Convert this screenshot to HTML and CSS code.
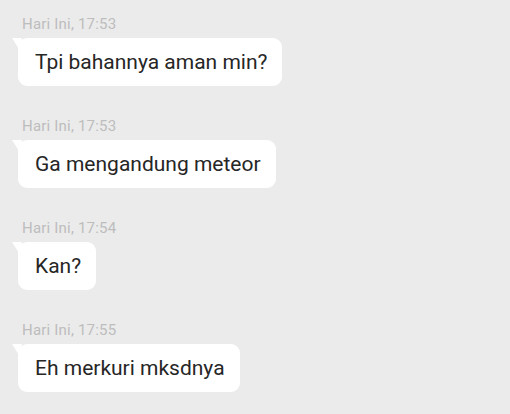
FILE: index.html
```html
<!DOCTYPE html>
<html lang="id">
<head>
<meta charset="utf-8">
<title>Chat</title>
<link rel="stylesheet" href="styles.css">
</head>
<body>
<main class="chat">
  <div class="msg">
    <div class="time">Hari Ini, 17:53</div>
    <div class="bubble">Tpi bahannya aman min?</div>
  </div>
  <div class="msg">
    <div class="time">Hari Ini, 17:53</div>
    <div class="bubble">Ga mengandung meteor</div>
  </div>
  <div class="msg">
    <div class="time">Hari Ini, 17:54</div>
    <div class="bubble">Kan?</div>
  </div>
  <div class="msg">
    <div class="time">Hari Ini, 17:55</div>
    <div class="bubble">Eh merkuri mksdnya</div>
  </div>
</main>
</body>
</html>
```
FILE: styles.css
```css
html, body {
  margin: 0;
  padding: 0;
  background: #ebebeb;
}
body {
  width: 510px;
  height: 414px;
  overflow: hidden;
  font-family: Roboto, "Noto Sans", "Liberation Sans", sans-serif;
}
.chat {
  display: flex;
  flex-direction: column;
  align-items: flex-start;
  gap: 30px;
  padding: 14px 0 0 18px;
}
.msg {
  display: flex;
  flex-direction: column;
  align-items: flex-start;
  gap: 4px;
}
.time {
  font-size: 15px;
  line-height: 20px;
  color: #bdbdbd;
  padding-left: 4px;
  letter-spacing: 0.2px;
}
.bubble {
  position: relative;
  background: #ffffff;
  color: #262626;
  font-size: 21px;
  line-height: 24px;
  padding: 12px 15px 12px 17px;
  border-radius: 9px;
}
.bubble::before {
  content: "";
  position: absolute;
  left: -6px;
  top: 0;
  width: 10px;
  height: 11px;
  background: #ffffff;
  clip-path: polygon(0 0, 100% 0, 70% 100%);
}
```
